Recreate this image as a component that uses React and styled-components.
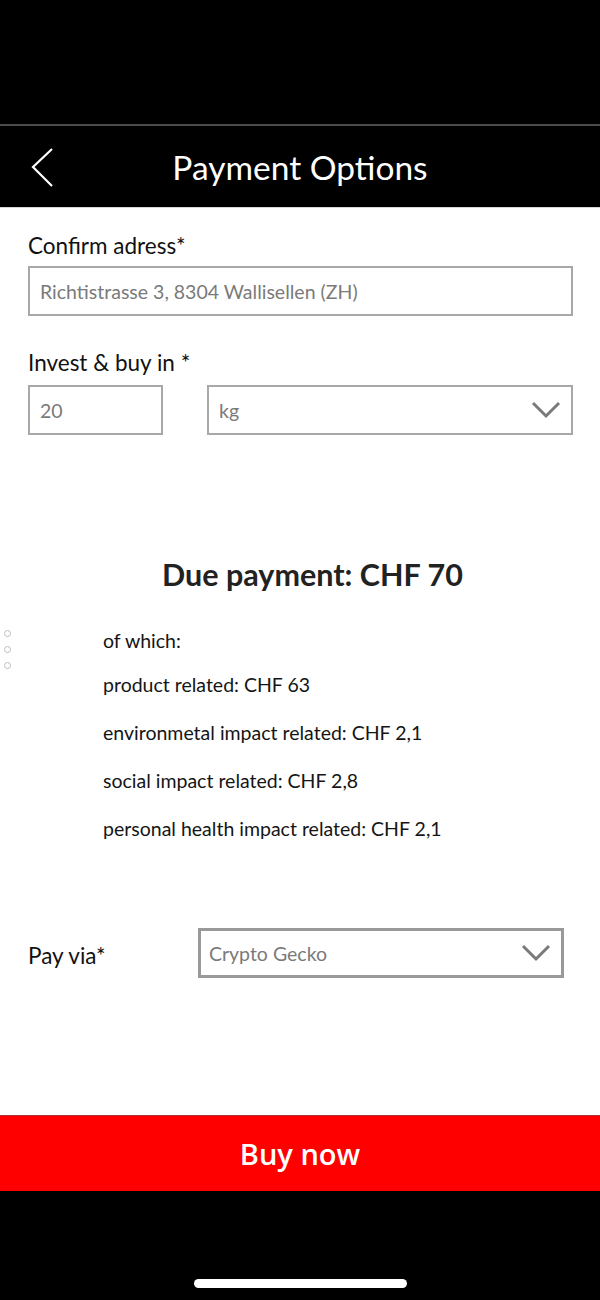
import React from "react";
import styled, { createGlobalStyle } from "styled-components";

const GlobalStyle = createGlobalStyle`
    body {
        margin: 0;
        background: #000;
        font-family: Lato, "Open Sans", sans-serif;
    }
`;

const Screen = styled.div`
    width: 600px;
    height: 1300px;
    display: flex;
    flex-direction: column;
    background: #fff;
    overflow: hidden;
`;

const StatusBar = styled.div`
    height: 124px;
    background: #000;
    border-bottom: 2px solid #4a4a4a;
`;

const Header = styled.div`
    height: 81px;
    background: #000;
    border-bottom: 1px solid #d6d6d6;
    display: flex;
    align-items: center;
    justify-content: center;
    position: relative;
`;

const BackButton = styled.button`
    position: absolute;
    left: 28px;
    top: 20px;
    width: 30px;
    height: 42px;
    padding: 0;
    border: 0;
    background: none;
`;

const Title = styled.h1`
    margin: 0;
    color: #fff;
    font-family: Lato, sans-serif;
    font-weight: 400;
    font-size: 33.5px;
    line-height: 40px;
`;

const Content = styled.div`
    flex: 1;
    display: flex;
    flex-direction: column;
    padding: 0 27px 0 28px;
    position: relative;
`;

const Label = styled.div`
    margin-top: ${(p) => p.top}px;
    font-size: 22.5px;
    line-height: 26px;
    color: #111;
`;

const Field = styled.div`
    box-sizing: border-box;
    height: 50px;
    width: ${(p) => (p.width ? `${p.width}px` : "100%")};
    border: ${(p) => p.border || 2}px solid ${(p) => p.color || "#a8a8a8"};
    display: flex;
    align-items: center;
    justify-content: space-between;
    padding: 0 10px 0 ${(p) => (p.border === 3 ? 8 : 10)}px;
    font-size: 19.5px;
    color: #7a7a7a;
    background: #fff;
`;

const FieldRow = styled.div`
    margin-top: ${(p) => p.top}px;
    margin-right: ${(p) => p.right || 0}px;
    display: flex;
    align-items: center;
    justify-content: space-between;
`;

const Due = styled.h2`
    margin: 122px 0 0;
    padding-left: 24px;
    text-align: center;
    font-size: 30.5px;
    line-height: 34px;
    font-weight: 700;
    color: #222;
`;

const Breakdown = styled.div`
    margin-top: 38px;
    padding-left: 75px;
    display: flex;
    flex-direction: column;
    gap: 24px;
`;

const Line = styled.div`
    font-size: 19.5px;
    line-height: 24px;
    color: #151515;
    &:nth-child(2) {
        margin-top: -4px;
    }
`;

const Dots = styled.div`
    position: absolute;
    left: 4px;
    top: 422px;
    display: flex;
    flex-direction: column;
    gap: 9px;
`;

const Dot = styled.span`
    width: 5px;
    height: 5px;
    border: 1px solid #bdbdbd;
    border-radius: 50%;
`;

const PayLabel = styled.div`
    font-size: 22.5px;
    line-height: 26px;
    color: #111;
    margin-top: 6px;
`;

const BuyButton = styled.button`
    height: 76px;
    border: 0;
    border-top: 1px solid #a33;
    background: #ff0000;
    color: #fff;
    font-family: "Open Sans", sans-serif;
    font-weight: 600;
    font-size: 29px;
    padding: 0;
`;

const BottomBar = styled.div`
    height: 109px;
    background: #000;
    display: flex;
    justify-content: center;
    align-items: flex-end;
    padding-bottom: 12px;
    box-sizing: border-box;
`;

const HomeIndicator = styled.div`
    width: 213px;
    height: 9px;
    border-radius: 5px;
    background: #fff;
`;

const Chevron = ({ color = "#7a7a7a" }) => (
    <svg width="30" height="18" viewBox="0 0 30 18">
        <polyline points="2,2 15,15 28,2" fill="none" stroke={color} strokeWidth="3" />
    </svg>
);

const breakdown = [
    "of which:",
    "product related: CHF 63",
    "environmetal impact related: CHF 2,1",
    "social impact related: CHF 2,8",
    "personal health impact related: CHF 2,1",
];

export default function App() {
    return (
        <Screen>
            <GlobalStyle />
            <StatusBar />
            <Header>
                <BackButton>
                    <svg width="30" height="42" viewBox="0 0 30 42">
                        <polyline points="24,3 5,21 24,40" fill="none" stroke="#fff" strokeWidth="2.2" />
                    </svg>
                </BackButton>
                <Title>Payment Options</Title>
            </Header>
            <Content>
                <Label top={25}>Confirm adress*</Label>
                <FieldRow top={7}>
                    <Field>Richtistrasse 3, 8304 Wallisellen (ZH)</Field>
                </FieldRow>
                <Label top={34}>Invest &amp; buy in *</Label>
                <FieldRow top={9}>
                    <Field width={135}>20</Field>
                    <Field width={366}>
                        kg
                        <Chevron />
                    </Field>
                </FieldRow>
                <Due>Due payment: CHF 70</Due>
                <Dots>
                    <Dot />
                    <Dot />
                    <Dot />
                </Dots>
                <Breakdown>
                    {breakdown.map((t) => (
                        <Line key={t}>{t}</Line>
                    ))}
                </Breakdown>
                <FieldRow top={87} right={9}>
                    <PayLabel>Pay via*</PayLabel>
                    <Field width={366} border={3} color="#999">
                        Crypto Gecko
                        <Chevron />
                    </Field>
                </FieldRow>
            </Content>
            <BuyButton>Buy now</BuyButton>
            <BottomBar>
                <HomeIndicator />
            </BottomBar>
        </Screen>
    );
}
